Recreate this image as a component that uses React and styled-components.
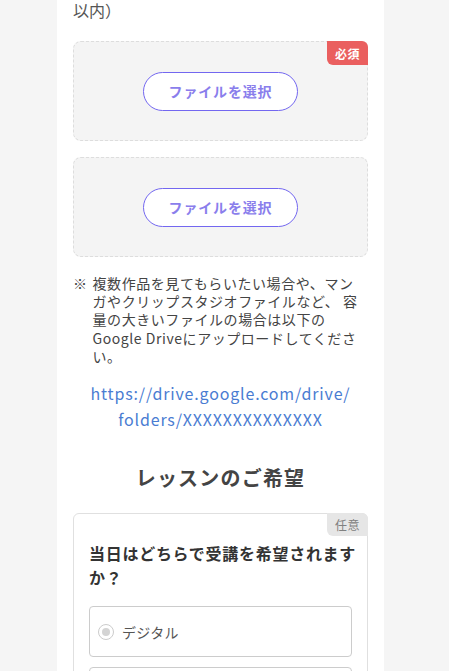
import React from "react";
import styled, { createGlobalStyle } from "styled-components";

const GlobalStyle = createGlobalStyle`
  html, body {
    margin: 0;
    padding: 0;
    background: #f5f5f5;
    font-family: "Noto Sans CJK JP", "Noto Sans", sans-serif;
    color: #444;
  }
`;

const Page = styled.div`
  display: flex;
  padding-left: 57px;
  min-height: 671px;
`;

const Column = styled.main`
  width: 327px;
  background: #ffffff;
  padding: 0 16px 40px;
  box-sizing: border-box;
  display: flex;
  flex-direction: column;
`;

const LeadText = styled.p`
  margin: 0 0 21px;
  font-size: 16px;
  line-height: 20px;
  color: #555;
`;

const UploadBox = styled.div`
  position: relative;
  height: 100px;
  box-sizing: border-box;
  border: 1px dashed #dddddd;
  border-radius: 8px;
  background: #f4f4f4;
  display: flex;
  align-items: center;
  justify-content: center;
  margin-bottom: 16px;
`;

const Badge = styled.span`
  position: absolute;
  top: -1px;
  right: -1px;
  width: 41px;
  height: ${(p) => (p.required ? "24px" : "23px")};
  display: flex;
  align-items: center;
  justify-content: center;
  font-size: 12px;
  font-weight: ${(p) => (p.required ? 700 : 400)};
  letter-spacing: 0.05em;
  color: ${(p) => (p.required ? "#ffffff" : "#808080")};
  background: ${(p) => (p.required ? "#ea5f5f" : "#e6e6e6")};
  border-radius: 0 6px 0 6px;
`;

const SelectButton = styled.button`
  width: 155px;
  height: 39px;
  border: 1px solid #7367f0;
  border-radius: 20px;
  background: #ffffff;
  color: #8a7eec;
  font-family: inherit;
  font-size: 14px;
  font-weight: 700;
  letter-spacing: 0.06em;
  cursor: pointer;
`;

const Note = styled.p`
  display: flex;
  gap: 5px;
  margin: 1px 0 0;
  font-size: 14px;
  line-height: 18.2px;
  letter-spacing: 0.04em;
  color: #444;
`;

const NoteMark = styled.span`
  flex: none;
`;

const DriveLink = styled.a`
  margin-top: 15px;
  text-align: center;
  font-size: 16px;
  line-height: 26px;
  letter-spacing: 0.052em;
  color: #4a7cd2;
  text-decoration: none;
`;

const SectionTitle = styled.h2`
  margin: 31px 0 20px;
  text-align: center;
  font-size: 20px;
  line-height: 30px;
  font-weight: 700;
  letter-spacing: 0.06em;
  color: #444;
`;

const Card = styled.section`
  position: relative;
  border: 1px solid #e0e0e0;
  border-radius: 6px;
  padding: 27px 15px 20px;
  display: flex;
  flex-direction: column;
  gap: 10px;
`;

const Question = styled.h3`
  margin: 0 -10px 7px 0;
  font-size: 16px;
  line-height: 24px;
  font-weight: 700;
  letter-spacing: 0.045em;
  color: #333;
`;

const Option = styled.label`
  height: 51px;
  box-sizing: border-box;
  border: 1px solid #cccccc;
  border-radius: 4px;
  display: flex;
  align-items: center;
  gap: 8px;
  padding: 0 8px;
  font-size: 14px;
  letter-spacing: 0.02em;
  color: #555;
`;

const Radio = styled.span`
  width: 16px;
  height: 16px;
  box-sizing: border-box;
  border: 1px solid #cccccc;
  border-radius: 50%;
  display: flex;
  align-items: center;
  justify-content: center;

  &::after {
    content: "";
    width: 8px;
    height: 8px;
    border-radius: 50%;
    background: #d4d4d4;
  }
`;

export default function App() {
  return (
    <>
      <GlobalStyle />
      <Page>
        <Column>
          <LeadText>以内）</LeadText>
          <UploadBox>
            <Badge required>必須</Badge>
            <SelectButton type="button">ファイルを選択</SelectButton>
          </UploadBox>
          <UploadBox>
            <SelectButton type="button">ファイルを選択</SelectButton>
          </UploadBox>
          <Note>
            <NoteMark>※</NoteMark>
            <span>
              複数作品を見てもらいたい場合や、マンガやクリップスタジオファイルなど、 容量の大きいファイルの場合は以下のGoogle Driveにアップロードしてください。
            </span>
          </Note>
          <DriveLink href="#">
            https://drive.google.com/drive/
            <br />
            folders/XXXXXXXXXXXXXX
          </DriveLink>
          <SectionTitle>レッスンのご希望</SectionTitle>
          <Card>
            <Badge>任意</Badge>
            <Question>当日はどちらで受講を希望されますか？</Question>
            <Option>
              <Radio />
              デジタル
            </Option>
            <Option>
              <Radio />
              アナログ
            </Option>
          </Card>
        </Column>
      </Page>
    </>
  );
}
